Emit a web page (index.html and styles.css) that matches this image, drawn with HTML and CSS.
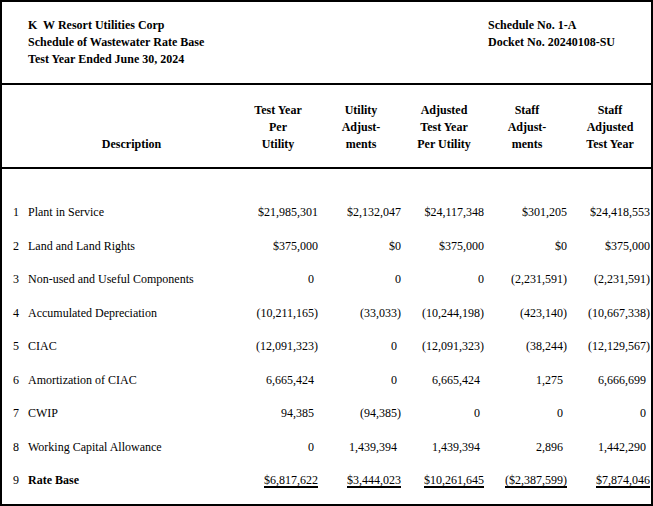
FILE: index.html
```html
<!DOCTYPE html>
<html>
<head>
<meta charset="utf-8">
<link rel="stylesheet" href="styles.css">
</head>
<body>
<div class="sheet">
  <div class="top">
    <div class="top-left">
      <div>K&nbsp; W Resort Utilities Corp</div>
      <div>Schedule of Wastewater Rate Base</div>
      <div>Test Year Ended June 30, 2024</div>
    </div>
    <div class="top-right">
      <div>Schedule No. 1-A</div>
      <div>Docket No. 20240108-SU</div>
    </div>
  </div>
  <div class="grid head">
    <div></div>
    <div class="hd desc-h">Description</div>
    <div class="hd">Test Year<br>Per<br>Utility</div>
    <div class="hd">Utility<br>Adjust-<br>ments</div>
    <div class="hd">Adjusted<br>Test Year<br>Per Utility</div>
    <div class="hd">Staff<br>Adjust-<br>ments</div>
    <div class="hd">Staff<br>Adjusted<br>Test Year</div>
  </div>
  <div class="body">
    <div class="grid row">
      <div class="ln">1</div><div class="desc">Plant in Service</div>
      <div class="v">$21,985,301</div><div class="v">$2,132,047</div><div class="v">$24,117,348</div><div class="v">$301,205</div><div class="v">$24,418,553</div>
    </div>
    <div class="grid row">
      <div class="ln">2</div><div class="desc">Land and Land Rights</div>
      <div class="v">$375,000</div><div class="v">$0</div><div class="v">$375,000</div><div class="v">$0</div><div class="v">$375,000</div>
    </div>
    <div class="grid row">
      <div class="ln">3</div><div class="desc">Non-used and Useful Components</div>
      <div class="v p">0</div><div class="v">0</div><div class="v">0</div><div class="v">(2,231,591)</div><div class="v">(2,231,591)</div>
    </div>
    <div class="grid row">
      <div class="ln">4</div><div class="desc">Accumulated Depreciation</div>
      <div class="v">(10,211,165)</div><div class="v">(33,033)</div><div class="v">(10,244,198)</div><div class="v">(423,140)</div><div class="v">(10,667,338)</div>
    </div>
    <div class="grid row">
      <div class="ln">5</div><div class="desc">CIAC</div>
      <div class="v">(12,091,323)</div><div class="v p">0</div><div class="v">(12,091,323)</div><div class="v">(38,244)</div><div class="v">(12,129,567)</div>
    </div>
    <div class="grid row">
      <div class="ln">6</div><div class="desc">Amortization of CIAC</div>
      <div class="v p">6,665,424</div><div class="v p">0</div><div class="v p">6,665,424</div><div class="v p">1,275</div><div class="v p">6,666,699</div>
    </div>
    <div class="grid row">
      <div class="ln">7</div><div class="desc">CWIP</div>
      <div class="v p">94,385</div><div class="v">(94,385)</div><div class="v p">0</div><div class="v p">0</div><div class="v p">0</div>
    </div>
    <div class="grid row">
      <div class="ln">8</div><div class="desc">Working Capital Allowance</div>
      <div class="v p">0</div><div class="v p">1,439,394</div><div class="v p">1,439,394</div><div class="v p">2,896</div><div class="v p">1,442,290</div>
    </div>
    <div class="grid row">
      <div class="ln">9</div><div class="desc bold">Rate Base</div>
      <div class="v"><span class="u">$6,817,622</span></div><div class="v"><span class="u">$3,444,023</span></div><div class="v"><span class="u">$10,261,645</span></div><div class="v"><span class="u">($2,387,599)</span></div><div class="v"><span class="u">$7,874,046</span></div>
    </div>
  </div>
</div>
</body>
</html>
```

FILE: styles.css
```css
html, body {
  margin: 0;
  padding: 0;
  background: #fff;
}
body {
  font-family: "Liberation Serif", "Times New Roman", serif;
  font-size: 12px;
  color: #000;
}
.sheet {
  box-sizing: border-box;
  width: 653px;
  height: 506px;
  border: 2px solid #000;
}
.top {
  display: flex;
  height: 83px;
  box-sizing: border-box;
  padding: 15px 0 0 26px;
  border-bottom: 2px solid #000;
  font-weight: bold;
  line-height: 17px;
}
.top-left {
  flex: 1;
}
.top-right {
  width: 163px;
}
.grid {
  display: grid;
  grid-template-columns: 26px 207px repeat(5, 83px);
}
.head {
  box-sizing: border-box;
  height: 84px;
  padding: 16.5px 0 14.5px;
  border-bottom: 2px solid #000;
  font-weight: bold;
  line-height: 17px;
}
.hd {
  text-align: center;
  align-self: end;
  padding-left: 3px;
}
.desc-h {
  padding-left: 0;
}
.body {
  padding-top: 27px;
}
.row {
  height: 33.5px;
  align-items: center;
  line-height: 17px;
}
.ln {
  padding-left: 11px;
}
.desc {
  white-space: nowrap;
}
.bold {
  font-weight: bold;
}
.v {
  text-align: right;
  white-space: nowrap;
}
.v.p {
  padding-right: 4px;
}
.u {
  text-decoration: underline;
  text-decoration-thickness: 2px;
  text-underline-offset: 2px;
}
```
